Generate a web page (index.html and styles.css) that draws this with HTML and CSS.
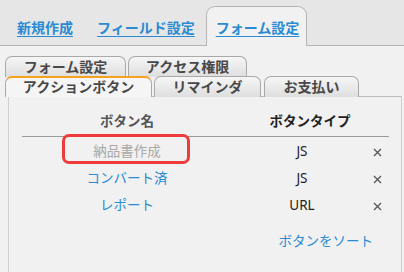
FILE: index.html
```html
<!DOCTYPE html>
<html lang="ja">
<head>
  <meta charset="UTF-8" />
  <title>フォーム設定</title>
  <link rel="stylesheet" href="styles.css">
</head>
<body>

<nav class="menu">
  <a class="menu-item" href="#">新規作成</a>
  <a class="menu-item" href="#">フィールド設定</a>
  <a class="menu-item activo" href="#">フォーム設定</a>
</nav>

<div class="ajustes">
  <div class="pestanas">
    <div class="fila">
      <span class="pestana p-form">フォーム設定</span>
      <span class="pestana p-acceso">アクセス権限</span>
    </div>
    <div class="fila">
      <span class="pestana p-accion activa">アクションボタン</span>
      <span class="pestana p-recordar">リマインダ</span>
      <span class="pestana p-pago">お支払い</span>
    </div>
  </div>

  <section class="panel">
    <div class="tabla">
      <div class="cabecera">
        <span class="col-nombre">ボタン名</span>
        <span class="col-tipo">ボタンタイプ</span>
        <span></span>
      </div>
      <div class="fila-boton">
        <span class="col-nombre desactivado marcado">納品書作成</span>
        <span class="col-tipo">JS</span>
        <span class="borrar"><svg width="9" height="9" viewBox="0 0 9 9"><path d="M1 1L8 8M8 1L1 8" stroke="#555" stroke-width="1.3"/></svg></span>
      </div>
      <div class="fila-boton">
        <span class="col-nombre"><a href="#">コンバート済</a></span>
        <span class="col-tipo">JS</span>
        <span class="borrar"><svg width="9" height="9" viewBox="0 0 9 9"><path d="M1 1L8 8M8 1L1 8" stroke="#555" stroke-width="1.3"/></svg></span>
      </div>
      <div class="fila-boton">
        <span class="col-nombre"><a href="#">レポート</a></span>
        <span class="col-tipo">URL</span>
        <span class="borrar"><svg width="9" height="9" viewBox="0 0 9 9"><path d="M1 1L8 8M8 1L1 8" stroke="#555" stroke-width="1.3"/></svg></span>
      </div>
    </div>
    <a class="ordenar" href="#">ボタンをソート</a>
  </section>
</div>

</body>
</html>
```

FILE: styles.css
```css
body { margin: 0; background: #f1f1f1; font-family: "Noto Sans", "Noto Sans CJK JP", sans-serif; font-size: 13.5px; color: #333; overflow: hidden; }
a { color: #2a8bd2; text-decoration: none; }

.menu { display: flex; align-items: flex-end; height: 45px; background: #e6e6e6; border-bottom: 1px solid #b5b5b5; padding-left: 6px; }
.menu-item { font-weight: bold; font-size: 14px; text-decoration: underline; text-underline-offset: 3px; padding: 0 11px 7px; line-height: 20px; white-space: nowrap; }
.menu-item + .menu-item { margin-left: 2px; }
.menu-item.activo { background: #f1f1f1; border: 1px solid #b5b5b5; border-bottom: none; border-radius: 9px 9px 0 0; margin-left: 0; margin-bottom: -1px; padding: 11px 7px 8px 9px; }

.ajustes { padding: 10px 2px 0 5px; }
.pestanas { display: flex; flex-direction: column; }
.fila { display: flex; height: 20px; }
.pestana { box-sizing: border-box; height: 21px; border: 1px solid #a9a9a9; border-bottom: none; border-radius: 7px 7px 0 0; background: linear-gradient(#f6f6f6, #dedede); color: #484848; font-weight: bold; font-size: 14px; line-height: 20px; text-align: center; margin-right: 2px; }
.p-form { width: 121px; }
.p-acceso { width: 119px; }
.p-accion { width: 147px; }
.p-recordar { width: 107px; }
.p-pago { width: 95px; margin-left: 1px; }
.pestana.activa { background: #f5f5f5; border-top: 2px solid #f5a21e; line-height: 18px; }

.panel { margin-left: 3px; background: #f1f1f1; border: 1px solid #cfcfcf; border-top: 1px solid #bdbdbd; height: 170px; padding: 12px 0 0 13px; }
.tabla { width: 367px; }
.cabecera, .fila-boton { display: grid; grid-template-columns: 210px 140px 17px; align-items: center; }
.cabecera { font-weight: bold; color: #555; height: 27px; border-bottom: 1px solid #9a9a9a; line-height: 20px; }
.cabecera span { padding-bottom: 3px; }
.cabecera .col-tipo { padding-left: 16px; }
.fila-boton { height: 27px; line-height: 20px; }
.fila-boton span { padding-top: 1px; }
.col-nombre { text-align: center; }
.col-tipo { text-align: center; color: #222; }
.desactivado { color: #a8a8a8; }
.marcado { position: relative; }
.marcado::after { content: ""; position: absolute; left: 40px; width: 122px; top: -6px; height: 24px; border: 3px solid #ee3b3b; border-radius: 7px; }
.borrar { text-align: left; padding-left: 1px; }
.borrar svg { display: block; margin-top: 2px; }
.ordenar { display: block; text-align: right; width: 351px; margin-top: 12px; }
```
